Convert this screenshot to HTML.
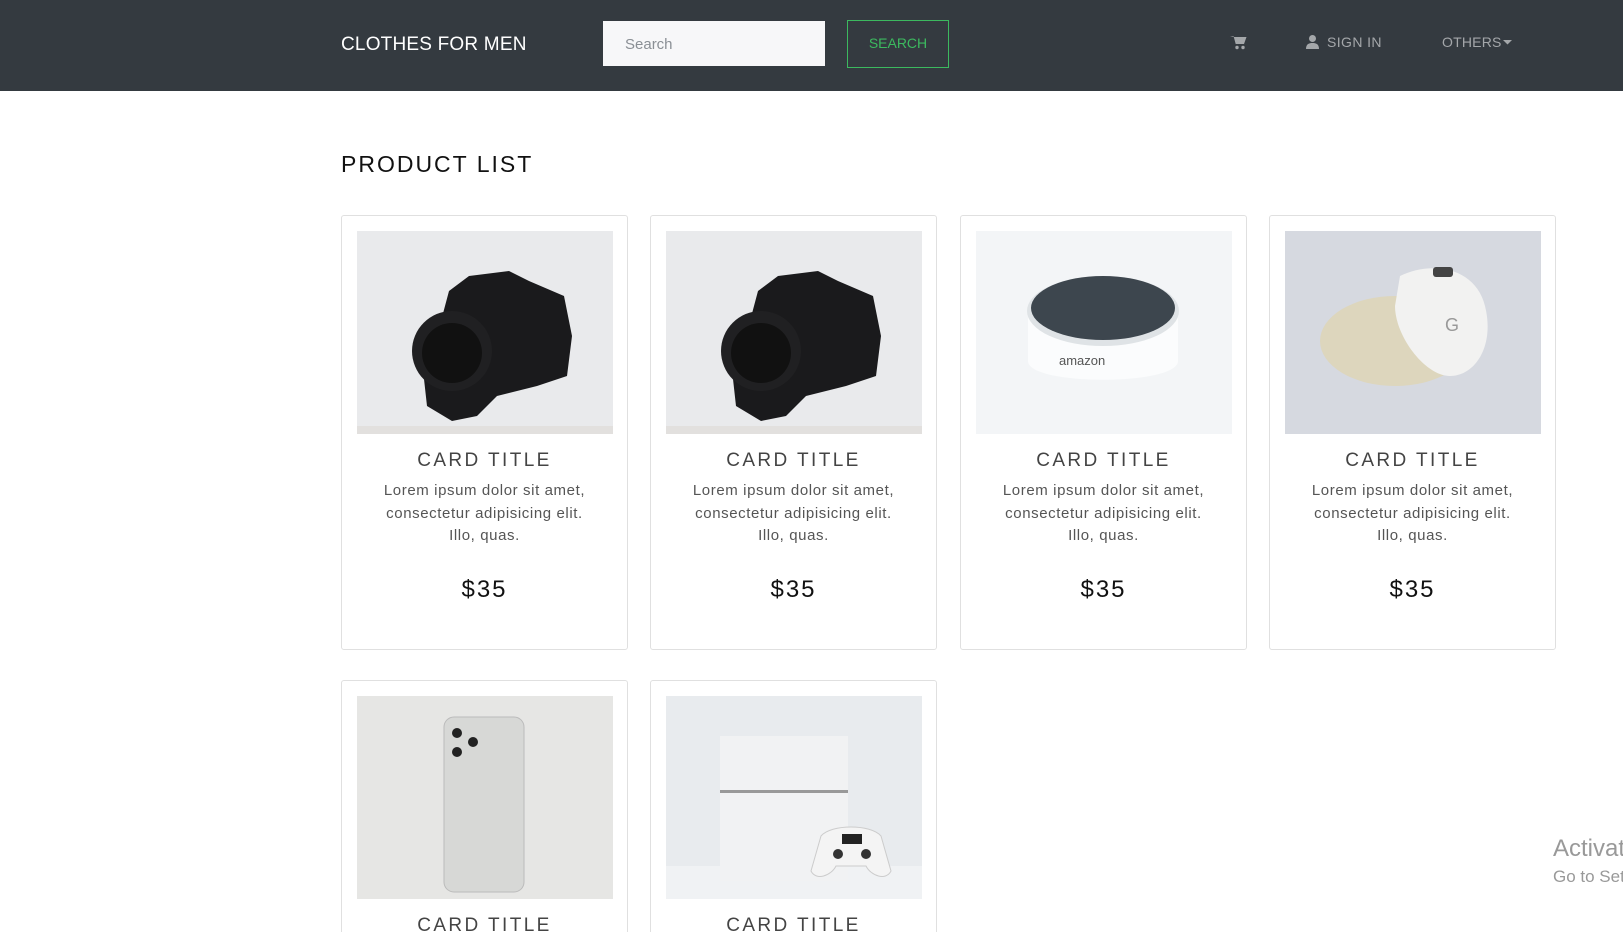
<!DOCTYPE html>
<html><head><meta charset="utf-8">
<style>
*{margin:0;padding:0;box-sizing:border-box}
html,body{width:1623px;height:932px;overflow:hidden}
body{background:#fff;font-family:"Liberation Sans",sans-serif;position:relative}
.wrap{position:absolute;left:0;top:0;width:1623px;height:932px;overflow:hidden}
.nav{position:absolute;left:0;top:0;width:1623px;height:91px;background:#343a40}
.brand{position:absolute;left:341px;top:34px;color:#fff;font-size:19px;letter-spacing:0.2px}
.search{position:absolute;left:603px;top:21px;width:222px;height:45px;background:#f7f7f9;color:#8a8f95;font-size:15px;padding:15px 22px 0}
.btn{position:absolute;left:847px;top:20px;width:102px;height:48px;border:1px solid #3cb95f;color:#3cb95f;font-size:14px;text-align:center;line-height:45px}
.nl{position:absolute;top:34px;color:#a4a7aa;font-size:14px;letter-spacing:0.4px}
h1{position:absolute;left:341px;top:151px;font-weight:normal;font-size:23px;letter-spacing:2px;color:#111}
.card{position:absolute;width:287px;height:435px;border:1px solid #e0e0e0;border-radius:3px;background:#fff;overflow:hidden}
.card svg{position:absolute;left:15px;top:15px;width:256px;height:203px;display:block}
.t{position:absolute;left:0;width:100%;top:234px;text-align:center;font-size:19px;letter-spacing:2.4px;color:#444}
.d{position:absolute;left:0;right:0;top:264px;text-align:center;font-size:15px;line-height:22.5px;color:#555;letter-spacing:0.6px;white-space:nowrap}
.p{position:absolute;left:0;width:100%;top:360px;text-align:center;font-size:24px;letter-spacing:2px;color:#111}
.act{position:absolute;left:1553px;color:#999;white-space:nowrap}
</style></head><body><div class="wrap">
<div class="nav">
<div class="brand">CLOTHES FOR MEN</div>
<div class="search">Search</div>
<div class="btn">SEARCH</div>
<svg style="position:absolute;left:1230px;top:35px" width="17" height="15" viewBox="0 0 17 15"><path d="M0 1h3.5l2.2 8h8.3l2.5-7H4.2z" fill="#a4a7aa"/><circle cx="7" cy="12.5" r="1.7" fill="#a4a7aa"/><circle cx="13" cy="12.5" r="1.7" fill="#a4a7aa"/></svg>
<svg style="position:absolute;left:1306px;top:35px" width="13" height="14" viewBox="0 0 13 14"><circle cx="6.5" cy="3.5" r="3.5" fill="#a4a7aa"/><path d="M0 14c0-5 3-6 6.5-6S13 9 13 14z" fill="#a4a7aa"/></svg>
<div class="nl" style="left:1327px">SIGN IN</div>
<div class="nl" style="left:1442px;letter-spacing:0.2px">OTHERS</div>
<svg style="position:absolute;left:1503px;top:40px" width="9" height="5"><path d="M0 0h9L4.5 4.5z" fill="#a4a7aa"/></svg>
</div>
<h1>PRODUCT LIST</h1>

<div class="card" style="left:341px;top:215px">
<svg viewBox="0 0 256 203" preserveAspectRatio="none"><rect width="256" height="203" fill="#e9eaec"/><rect y="195" width="256" height="8" fill="#e2e0de"/><path d="M92 60l20-15 40-5 20 10 35 15 8 40-5 40-30 10-40 10-20 20-25 5-25-15-5-45 15-25z" fill="#1a1a1c"/><circle cx="95" cy="120" r="40" fill="#202022"/><circle cx="95" cy="122" r="30" fill="#111"/></svg>
<div class="t">CARD TITLE</div><div class="d">Lorem ipsum dolor sit amet,<br>consectetur adipisicing elit.<br>Illo, quas.</div><div class="p">$35</div></div>

<div class="card" style="left:650px;top:215px">
<svg viewBox="0 0 256 203" preserveAspectRatio="none"><rect width="256" height="203" fill="#e9eaec"/><rect y="195" width="256" height="8" fill="#e2e0de"/><path d="M92 60l20-15 40-5 20 10 35 15 8 40-5 40-30 10-40 10-20 20-25 5-25-15-5-45 15-25z" fill="#1a1a1c"/><circle cx="95" cy="120" r="40" fill="#202022"/><circle cx="95" cy="122" r="30" fill="#111"/></svg>
<div class="t">CARD TITLE</div><div class="d">Lorem ipsum dolor sit amet,<br>consectetur adipisicing elit.<br>Illo, quas.</div><div class="p">$35</div></div>

<div class="card" style="left:960px;top:215px">
<svg viewBox="0 0 256 203" preserveAspectRatio="none"><rect width="256" height="203" fill="#f3f5f7"/><path d="M52 80v50c0 25 150 25 150 0V80z" fill="#fbfcfd"/><ellipse cx="127" cy="80" rx="76" ry="35" fill="#dfe3e6"/><ellipse cx="127" cy="77" rx="72" ry="32" fill="#3d464e"/><text x="83" y="134" font-size="13" fill="#555" font-family="Liberation Sans">amazon</text></svg>
<div class="t">CARD TITLE</div><div class="d">Lorem ipsum dolor sit amet,<br>consectetur adipisicing elit.<br>Illo, quas.</div><div class="p">$35</div></div>

<div class="card" style="left:1269px;top:215px">
<svg viewBox="0 0 256 203" preserveAspectRatio="none"><rect width="256" height="203" fill="#d6d9e0"/><ellipse cx="110" cy="110" rx="75" ry="45" fill="#ddd6bd"/><path d="M115 45c30-15 75-10 85 30s-10 70-35 70-55-40-55-70z" fill="#f2f2f1"/><rect x="148" y="36" width="20" height="10" rx="3" fill="#444"/><text x="160" y="100" font-size="18" fill="#999" font-family="Liberation Sans">G</text></svg>
<div class="t">CARD TITLE</div><div class="d">Lorem ipsum dolor sit amet,<br>consectetur adipisicing elit.<br>Illo, quas.</div><div class="p">$35</div></div>

<div class="card" style="left:341px;top:680px;height:260px">
<svg viewBox="0 0 256 203" preserveAspectRatio="none"><rect width="256" height="203" fill="#e6e6e4"/><rect x="87" y="21" width="80" height="175" rx="10" fill="#d7d8d6" stroke="#bbb"/><circle cx="100" cy="37" r="5" fill="#222"/><circle cx="116" cy="46" r="5" fill="#222"/><circle cx="100" cy="56" r="5" fill="#222"/></svg>
<div class="t">CARD TITLE</div></div>

<div class="card" style="left:650px;top:680px;height:260px">
<svg viewBox="0 0 256 203" preserveAspectRatio="none"><rect width="256" height="203" fill="#e8ebee"/><rect y="170" width="256" height="33" fill="#f0f2f4"/><rect x="54" y="40" width="128" height="145" fill="#f1f2f3"/><rect x="54" y="94" width="128" height="3" fill="#999"/><path d="M155 140c10-12 50-12 60 0l10 35c-5 10-20 5-25-5h-30c-5 10-20 15-25 5z" fill="#f4f4f4" stroke="#ccc"/><rect x="176" y="138" width="20" height="10" fill="#222"/><circle cx="172" cy="158" r="5" fill="#333"/><circle cx="200" cy="158" r="5" fill="#333"/></svg>
<div class="t">CARD TITLE</div></div>

<div class="act" style="top:835px;font-size:24px">Activate Windows</div>
<div class="act" style="top:867px;font-size:17px">Go to Settings</div>
</div></body></html>
